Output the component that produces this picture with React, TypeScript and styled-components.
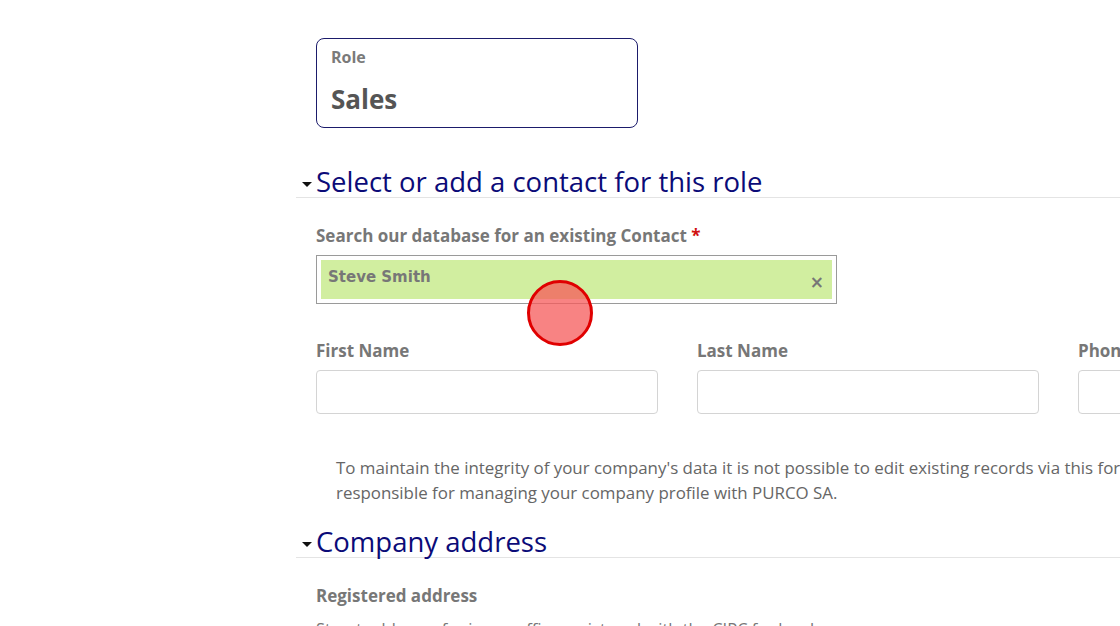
import { createGlobalStyle, styled } from "styled-components";

const Global = createGlobalStyle`
  html, body {
    margin: 0;
    padding: 0;
    background: #fff;
    overflow: hidden;
    font-family: "Open Sans", "Liberation Sans", sans-serif;
  }
`;

const Page = styled.main`
  position: relative;
  width: 1300px;
  padding: 38px 0 0 296px;
  box-sizing: border-box;
`;

const RoleCard = styled.div`
  margin-left: 20px;
  width: 322px;
  height: 90px;
  box-sizing: border-box;
  border: 1.5px solid #1b1b6b;
  border-radius: 8px;
  padding: 7px 14px;
  display: flex;
  flex-direction: column;
  gap: 13px;
`;

const RoleLabel = styled.span`
  font-size: 16px;
  font-weight: 700;
  color: #7a7a7a;
  line-height: 22px;
`;

const RoleValue = styled.span`
  font-size: 26px;
  font-weight: 700;
  color: #555;
  line-height: 36px;
`;

const SectionHeader = styled.h2<{ $top: number }>`
  margin: ${(p) => p.$top}px 0 0;
  display: flex;
  align-items: flex-start;
  gap: 4px;
  padding-left: 6px;
  border-bottom: 1px solid #e4e4e4;
  height: 35px;
  font-size: 27.5px;
  font-weight: 400;
  color: #0b0b78;
  line-height: 40px;
  white-space: nowrap;

  svg {
    margin-top: 20px;
    flex: none;
  }
`;

const Caret = () => (
  <svg width="10" height="6" viewBox="0 0 10 6">
    <path d="M0 0 L10 0 L5 5 Z" fill="#111" />
  </svg>
);

const Body = styled.div`
  padding-left: 20px;
`;

const Label = styled.label<{ $top?: number }>`
  display: block;
  margin-top: ${(p) => p.$top ?? 0}px;
  font-size: 17px;
  font-weight: 700;
  color: #777;
  line-height: 24px;
  white-space: nowrap;
`;

const Req = styled.span`
  color: #d01010;
`;

const SelectBox = styled.div`
  margin-top: 7px;
  width: 521px;
  height: 49px;
  box-sizing: border-box;
  border: 1px solid #9a9a9a;
  padding: 4px;
`;

const Chosen = styled.div`
  height: 100%;
  background: #d1eea0;
  display: flex;
  align-items: center;
  justify-content: space-between;
  padding: 0 8px 6px 7px;
  box-sizing: border-box;
  font-family: "DejaVu Sans", Verdana, sans-serif;
  font-size: 15px;
  font-weight: 700;
  color: #777;
`;

const Clear = styled.span`
  font-size: 17px;
  margin-top: 10px;
`;

const FieldRow = styled.div`
  margin-top: 35px;
  display: grid;
  grid-template-columns: 342px 342px 342px;
  column-gap: 39px;
`;

const Field = styled.div`
  display: flex;
  flex-direction: column;
  gap: 7px;
`;

const Input = styled.div`
  height: 44px;
  box-sizing: border-box;
  border: 1.5px solid #d4d4d4;
  border-radius: 4px;
`;

const Notice = styled.p`
  margin: 41px 0 0 20px;
  font-size: 16.9px;
  line-height: 25px;
  color: #666;
  white-space: nowrap;
`;

const Hint = styled.p`
  margin: 11px 0 0;
  font-size: 16.5px;
  color: #777;
  line-height: 20px;
  white-space: nowrap;
`;

const Click = styled.div`
  position: absolute;
  left: 527px;
  top: 280px;
  width: 66px;
  height: 66px;
  box-sizing: border-box;
  border-radius: 50%;
  border: 3px solid #e00000;
  background: rgba(245, 90, 90, 0.75);
`;

export default function App() {
  return (
    <>
      <Global />
      <Page>
        <RoleCard>
          <RoleLabel>Role</RoleLabel>
          <RoleValue>Sales</RoleValue>
        </RoleCard>

        <SectionHeader $top={34}>
          <Caret />
          Select or add a contact for this role
        </SectionHeader>
        <Body>
          <Label $top={26}>
            Search our database for an existing Contact <Req>*</Req>
          </Label>
          <SelectBox>
            <Chosen>
              Steve Smith
              <Clear>×</Clear>
            </Chosen>
          </SelectBox>

          <FieldRow>
            <Field>
              <Label>First Name</Label>
              <Input />
            </Field>
            <Field>
              <Label>Last Name</Label>
              <Input />
            </Field>
            <Field>
              <Label>Phone Number</Label>
              <Input />
            </Field>
          </FieldRow>

          <Notice>
            To maintain the integrity of your company's data it is not possible to edit existing records via this form. Please contact the person
            <br />
            responsible for managing your company profile with PURCO SA.
          </Notice>
        </Body>

        <SectionHeader $top={17}>
          <Caret />
          Company address
        </SectionHeader>
        <Body>
          <Label $top={26}>Registered address</Label>
          <Hint>Street address of primary office registered with the CIPC for legal purposes.</Hint>
        </Body>

        <Click />
      </Page>
    </>
  );
}
